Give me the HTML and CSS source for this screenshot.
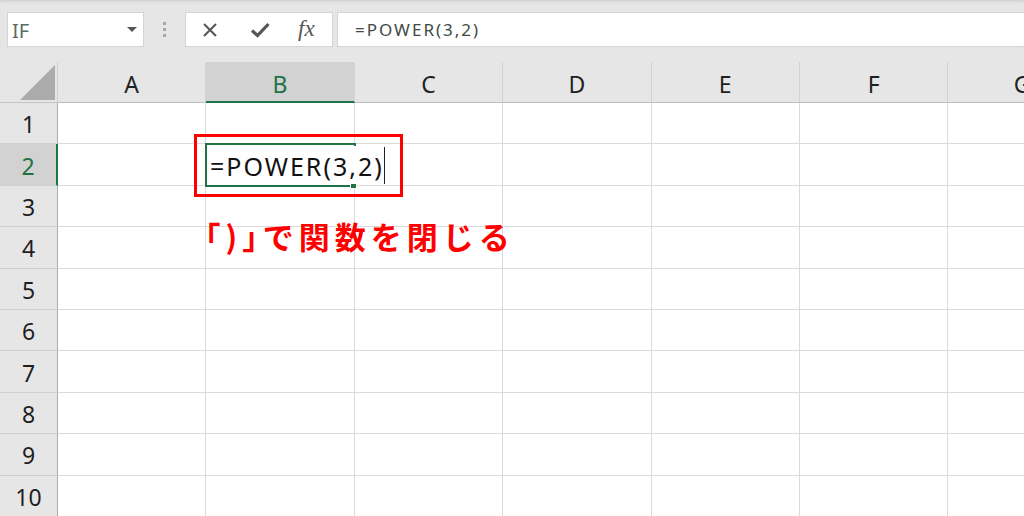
FILE: index.html
```html
<!DOCTYPE html>
<html lang="ja">
<head>
<meta charset="utf-8">
<title>POWER</title>
<link rel="stylesheet" href="styles.css">
</head>
<body>
<div class="app">
  <div class="toolbar">
    <div class="namebox"><span class="name">IF</span><span class="arrow"></span></div>
    <div class="grip"><i></i><i></i><i></i></div>
    <div class="fxbtns">
      <svg class="ico" width="16" height="14" viewBox="0 0 16 14"><path d="M2 1 L14 13 M14 1 L2 13" stroke="#555" stroke-width="2" fill="none"/></svg>
      <svg class="ico" width="20" height="16" viewBox="0 0 20 16"><path d="M2 8.5 L7.5 13.5 L18.5 2" stroke="#555" stroke-width="3.2" fill="none"/></svg>
      <span class="fx">fx</span>
    </div>
    <div class="formula">=POWER(3,2)</div>
  </div>

  <div class="sheet">
    <div class="corner"><span class="tri"></span></div>
    <div class="ch">A</div>
    <div class="ch sel">B</div>
    <div class="ch">C</div>
    <div class="ch">D</div>
    <div class="ch">E</div>
    <div class="ch">F</div>
    <div class="ch">G</div>

    <div class="rh">1</div><div class="c"></div><div class="c"></div><div class="c"></div><div class="c"></div><div class="c"></div><div class="c"></div><div class="c"></div>
    <div class="rh sel">2</div><div class="c"></div><div class="c active"><span class="handle"></span></div><div class="c"></div><div class="c"></div><div class="c"></div><div class="c"></div><div class="c"></div>
    <div class="rh">3</div><div class="c"></div><div class="c"></div><div class="c"></div><div class="c"></div><div class="c"></div><div class="c"></div><div class="c"></div>
    <div class="rh">4</div><div class="c"></div><div class="c"></div><div class="c"></div><div class="c"></div><div class="c"></div><div class="c"></div><div class="c"></div>
    <div class="rh">5</div><div class="c"></div><div class="c"></div><div class="c"></div><div class="c"></div><div class="c"></div><div class="c"></div><div class="c"></div>
    <div class="rh">6</div><div class="c"></div><div class="c"></div><div class="c"></div><div class="c"></div><div class="c"></div><div class="c"></div><div class="c"></div>
    <div class="rh">7</div><div class="c"></div><div class="c"></div><div class="c"></div><div class="c"></div><div class="c"></div><div class="c"></div><div class="c"></div>
    <div class="rh">8</div><div class="c"></div><div class="c"></div><div class="c"></div><div class="c"></div><div class="c"></div><div class="c"></div><div class="c"></div>
    <div class="rh">9</div><div class="c"></div><div class="c"></div><div class="c"></div><div class="c"></div><div class="c"></div><div class="c"></div><div class="c"></div>
    <div class="rh">10</div><div class="c"></div><div class="c"></div><div class="c"></div><div class="c"></div><div class="c"></div><div class="c"></div><div class="c"></div>
  </div>

  <div class="editor"><span class="edtext">=POWER(3,2)</span><span class="caret"></span></div>
  <div class="redbox"></div>
  <div class="caption">「)」で関数を閉じる</div>
</div>
</body>
</html>
```

FILE: styles.css
```css
html, body {
  margin: 0;
  padding: 0;
  width: 1024px;
  height: 516px;
  overflow: hidden;
  background: #ffffff;
  font-family: "Noto Sans", "Open Sans", sans-serif;
}

.app {
  position: relative;
  width: 1024px;
  height: 516px;
  overflow: hidden;
}

/* ---------- toolbar ---------- */
.toolbar {
  height: 62px;
  box-sizing: border-box;
  background: #e6e6e6;
  box-shadow: inset 0 3px 3px -2px #c9c9c9;
  display: flex;
  align-items: flex-start;
  padding: 12px 0 0 7px;
}

.namebox {
  width: 137px;
  height: 35px;
  box-sizing: border-box;
  background: #fff;
  border: 1px solid #d4d4d4;
  display: flex;
  align-items: center;
  padding-left: 4px;
}
.name {
  flex: 1;
  font-size: 20px;
  color: #5d6c62;
  line-height: 1;
  margin-top: 2px;
}
.arrow {
  width: 0;
  height: 0;
  border-left: 5px solid transparent;
  border-right: 5px solid transparent;
  border-top: 5px solid #555;
  margin-right: 6px;
}

.grip {
  width: 41px;
  height: 35px;
  display: flex;
  flex-direction: column;
  align-items: center;
  justify-content: center;
  gap: 3px;
}
.grip i {
  display: block;
  width: 3px;
  height: 3px;
  background: #a9a9a9;
}

.fxbtns {
  width: 148px;
  height: 35px;
  box-sizing: border-box;
  background: #fff;
  border: 1px solid #d4d4d4;
  display: flex;
  align-items: center;
  padding-left: 16px;
}
.ico { display: block; }
.fxbtns .ico:nth-child(1) { margin-right: 32px; }
.fxbtns .ico:nth-child(2) { margin-right: 28px; }
.fx {
  font-family: "Liberation Serif", "DejaVu Serif", serif;
  font-style: italic;
  font-size: 23px;
  color: #555;
  line-height: 1;
  margin-top: -2px;
}

.formula {
  flex: 1;
  height: 35px;
  box-sizing: border-box;
  margin-left: 4px;
  background: #fff;
  border: 1px solid #d4d4d4;
  border-right: none;
  font-size: 17px;
  letter-spacing: 2px;
  color: #3f4a43;
  padding-left: 17px;
  line-height: 33px;
}

/* ---------- sheet ---------- */
.sheet {
  display: grid;
  grid-template-columns: 58px repeat(7, 148.4px);
  grid-template-rows: 41px repeat(10, 41.4px);
}

.corner {
  background: #e6e6e6;
  border-right: 1px solid #d0d0d0;
  border-bottom: 1px solid #c4c4c4;
  box-sizing: border-box;
  position: relative;
}
.tri {
  position: absolute;
  right: 2px;
  bottom: 2px;
  width: 0;
  height: 0;
  border-left: 35px solid transparent;
  border-bottom: 35px solid #ababab;
}

.ch {
  background: #e6e6e6;
  border-right: 1px solid #d2d2d2;
  border-bottom: 1px solid #bdbdbd;
  box-sizing: border-box;
  display: flex;
  align-items: center;
  justify-content: center;
  font-size: 23px;
  color: #1f1f1f;
  padding-top: 3px;
}
.ch.sel {
  background: #d2d2d2;
  color: #217346;
  border-bottom: 2px solid #217346;
  padding-top: 4px;
}

.rh {
  background: #e6e6e6;
  border-right: 1px solid #ababab;
  border-bottom: 1px solid #d0d0d0;
  box-sizing: border-box;
  display: flex;
  align-items: center;
  justify-content: center;
  font-size: 23px;
  color: #1f1f1f;
  padding-top: 2px;
}
.rh.sel {
  background: #d2d2d2;
  color: #217346;
  border-right: 2px solid #217346;
}

.c {
  border-right: 1px solid #dadada;
  border-bottom: 1px solid #dadada;
  box-sizing: border-box;
  background: #fff;
}
.c.active {
  position: relative;
  border: 2px solid #217346;
  margin: -1px 0 0 -1px;
  width: calc(100% + 2px);
  height: calc(100% + 2px);
}
.handle {
  position: absolute;
  right: -3px;
  bottom: -4px;
  width: 5px;
  height: 5px;
  background: #217346;
  border: 1px solid #fff;
}

/* ---------- overlays ---------- */
.editor {
  position: absolute;
  left: 208px;
  top: 146px;
  width: 180px;
  height: 38px;
  background: #fff;
  display: flex;
  align-items: center;
}
.edtext {
  font-size: 25px;
  letter-spacing: 2px;
  color: #111;
  line-height: 1;
  margin-left: 2px;
  margin-top: 2px;
}
.caret {
  width: 1px;
  height: 37px;
  background: #222;
  margin-left: 0;
}

.redbox {
  position: absolute;
  left: 194px;
  top: 134px;
  width: 203px;
  height: 57px;
  border: 3px solid #ff0000;
}

.caption {
  position: absolute;
  left: 205px;
  top: 216px;
  font-family: "Noto Sans CJK JP", "Noto Sans", sans-serif;
  font-feature-settings: "halt";
  font-weight: bold;
  font-size: 31px;
  letter-spacing: 5px;
  color: #ff0000;
  line-height: 1.3;
}
```
